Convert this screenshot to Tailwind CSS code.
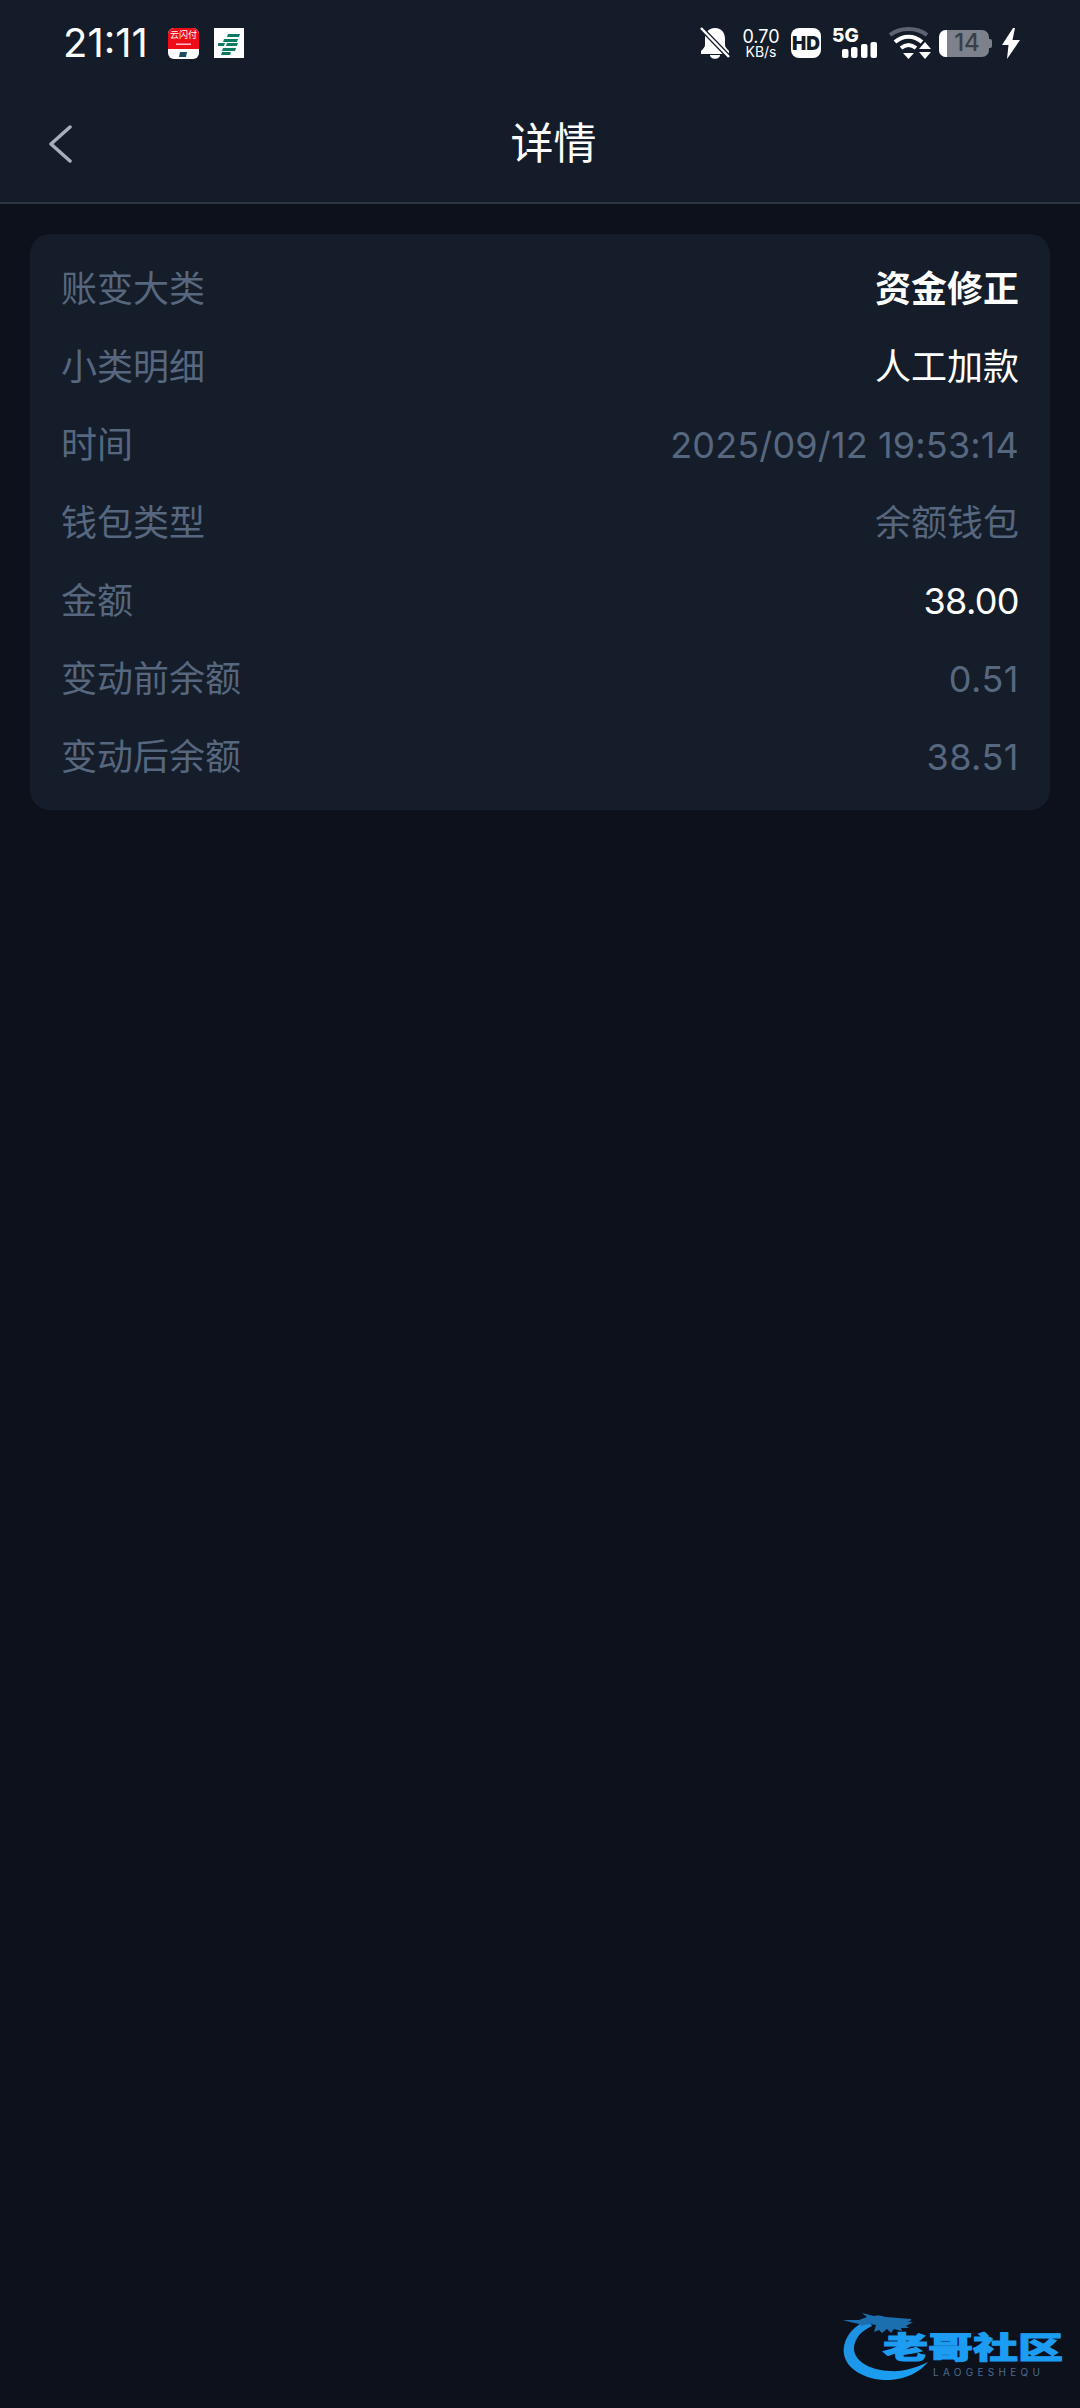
<!DOCTYPE html>
<html lang="zh-CN">
<head>
    <meta charset="UTF-8">
    <meta name="viewport" content="width=device-width, initial-scale=1.0">
    <title>详情</title>
    <script src="https://cdn.jsdelivr.net/npm/@tailwindcss/browser@4"></script>
</head>
<body class="bg-[#0d111c] font-['Inter','Noto_Sans_CJK_SC',sans-serif]">
  <div class="relative w-[1080px] h-[2408px] overflow-hidden">

    <!-- header -->
    <header class="bg-[#141c29] h-[204px] border-b-2 border-[#2a3642]">
      <!-- status bar -->
      <div class="flex justify-between items-center h-[86px] pl-[63px] pr-[60px]">
        <div class="flex items-center">
          <span class="text-white text-[40px] leading-none w-[105px]">21:11</span>
          <div class="relative w-[31px] h-[31px] rounded-[6px] bg-white overflow-hidden">
            <div class="h-[21px] bg-[#ee0d16] flex justify-center text-white text-[9px] leading-[14px] whitespace-nowrap">云闪付</div>
            <svg class="absolute left-0 top-0 w-[31px] h-[31px]" viewBox="0 0 31 31">
              <rect x="8" y="15.500" width="15" height="1.500" fill="#fbc"/>
              <path d="M12 24h7l-1 5h-7z" fill="#1d4d63"/>
            </svg>
          </div>
          <svg class="w-[30px] h-[30px] ml-[15px]" viewBox="0 0 30 30">
            <rect width="30" height="30" fill="#fff"/>
            <path d="M14 6h12l-1 3H13zM10 11h14l-1 3H9zM4 15h7l-1 3H4zM13 15h11l-1 3H12zM9 20h13l-1 3H8zM8 24h9l-1 3H7z" fill="#0e7a62"/>
          </svg>
        </div>
        <div class="flex items-center">
          <svg class="w-[30px] h-[32px]" viewBox="0 0 30 32">
            <path d="M15 1C8 1 5 6 5 12v6c0 2-2 4-4 6v3h28v-3c-2-2-4-4-4-6v-6C25 6 22 1 15 1zM10 28c0 5 10 5 10 0z" fill="#fff"/>
            <path d="M1 1l28 29" stroke="#141c29" stroke-width="5"/>
            <path d="M1 1l28 29" stroke="#fff" stroke-width="2.500"/>
          </svg>
          <div class="ml-[12px] w-[38px] flex flex-col items-center text-white leading-none">
            <span class="text-[18px] leading-[17px]">0.70</span>
            <span class="text-[14px] leading-[14px]">KB/s</span>
          </div>
          <div class="ml-[11px] w-[30px] h-[30px] rounded-[8px] bg-white flex items-center justify-center text-[#141c29] text-[19px] font-black leading-none">HD</div>
          <div class="relative ml-[11px] w-[46px] h-[32px]">
            <span class="absolute left-0 top-0 text-white text-[19px] leading-[17px] font-extrabold">5G</span>
            <svg class="w-[46px] h-[32px]" viewBox="0 0 46 32">
              <rect x="10" y="22" width="6.500" height="9" rx="2" fill="#fff"/>
              <rect x="19" y="20" width="6.500" height="11" rx="2" fill="#fff"/>
              <rect x="29" y="17" width="6.500" height="14" rx="2" fill="#fff"/>
              <rect x="38.500" y="15" width="6.500" height="16" rx="2" fill="#fff"/>
            </svg>
          </div>
          <svg class="ml-[11px] w-[42px] h-[32px]" viewBox="0 0 42 32">
            <path d="M1 8C11 0 28 0 38 8" stroke="#5b6470" stroke-width="4" fill="none"/>
            <path d="M6 15c8-7 19-7 27 0" stroke="#fff" stroke-width="4" fill="none"/>
            <path d="M12 21c5-4 10-4 15 0" stroke="#fff" stroke-width="4" fill="none"/>
            <path d="M14 26h11l-5.500 6z" fill="#fff"/>
            <path d="M30 22h12l-6-7zM30 25h12l-6 7z" fill="#fff"/>
          </svg>
          <div class="ml-[8px] flex items-center">
            <div class="relative w-[50px] h-[27px] rounded-[7px] bg-[#7c818b] overflow-hidden flex items-center justify-center text-[#3a3f47] text-[24px] font-medium leading-none pl-[6px]">
              <div class="absolute left-0 top-0 bottom-0 w-[8px] bg-white"></div>
              14
            </div>
            <div class="w-[3px] h-[9px] rounded-r-[2px] bg-[#7c818b]"></div>
          </div>
          <svg class="ml-[10px] w-[18px] h-[31px]" viewBox="0 0 18 31">
            <path d="M11 0L0 17h6.500L5 31 18 12h-7.500L13 0z" fill="#fff"/>
          </svg>
        </div>
      </div>
      <!-- nav -->
      <div class="relative flex items-center justify-center h-[116px]">
        <svg class="absolute left-[48px] top-[39px] w-[24px] h-[38px]" viewBox="0 0 24 38">
          <path d="M22 2L3 19l19 17" stroke="#a7afba" stroke-width="3.500" stroke-linecap="round" stroke-linejoin="round" fill="none"/>
        </svg>
        <h1 class="text-white text-[43px] leading-none ml-[27px] mt-[-2px]">详情</h1>
      </div>
    </header>

    <!-- detail card -->
    <main class="mx-[30px] mt-[30px] h-[576px] rounded-[20px] bg-[#141d29] px-[31px] pt-[16px] text-[36px] text-[#57677f]">
      <div class="flex justify-between items-center h-[78px]"><span>账变大类</span><span class="text-white font-bold">资金修正</span></div>
      <div class="flex justify-between items-center h-[78px]"><span>小类明细</span><span class="text-white">人工加款</span></div>
      <div class="flex justify-between items-center h-[78px]"><span>时间</span><span class="tracking-[0.150px]">2025/09/12 19:53:14</span></div>
      <div class="flex justify-between items-center h-[78px]"><span>钱包类型</span><span>余额钱包</span></div>
      <div class="flex justify-between items-center h-[78px]"><span>金额</span><span class="text-white tracking-[-0.600px]">38.00</span></div>
      <div class="flex justify-between items-center h-[78px]"><span>变动前余额</span><span class="tracking-[0.500px]">0.51</span></div>
      <div class="flex justify-between items-center h-[78px]"><span>变动后余额</span><span class="tracking-[0.500px]">38.51</span></div>
    </main>

    <!-- watermark -->
    <div class="absolute left-[840px] top-[2312px] w-[230px] h-[72px]">
      <svg class="absolute left-0 top-0 w-[100px] h-[70px]" viewBox="0 0 100 70">
        <defs>
          <linearGradient id="dragon" x1="0" y1="0" x2="1" y2="1">
            <stop offset="0" stop-color="#1f8fe0"/>
            <stop offset="1" stop-color="#1aa3f5"/>
          </linearGradient>
        </defs>
        <path d="M28 8C12 14 2 28 4 42c2 15 22 27 46 26 16-1 30-8 38-18-12 6-26 10-38 9C28 58 13 48 14 35c1-9 7-16 18-21z" fill="url(#dragon)"/>
        <path d="M3 8l16 0 8-3-5-4 12 3c4-1 8 0 12 1l25 2c1 1-1 2-3 3l5 0-7 4 3 2-8 0 1 3-8-2-3 4-4-4-5 4-3-3-5 2 2-7c-5-1-10-1-14 1C20 11 11 11 3 8z" fill="#1c6fae"/>
      </svg>
      <div class="absolute left-[43px] top-[18px] w-[180px] flex justify-center origin-center scale-x-[1.5] text-[30px] leading-[34px] font-black text-[#1c9cf2] [-webkit-text-stroke:1px_#1c9cf2]">老哥社区</div>
      <div class="absolute left-[93px] top-[54px] text-[10px] leading-[12px] tracking-[4.300px] text-[#4a6b8c]">LAOGESHEQU</div>
    </div>
  </div>
</body>
</html>
